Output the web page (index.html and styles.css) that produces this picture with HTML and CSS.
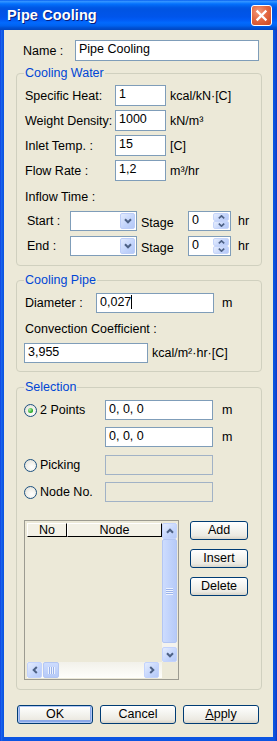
FILE: index.html
```html
<!DOCTYPE html>
<html lang="en">
<head>
  <meta charset="UTF-8" />
  <meta name="viewport" content="width=device-width, initial-scale=1.0" />
  <title>Pipe Cooling</title>
  <link rel="stylesheet" href="styles.css">
</head>
<body>
  <div class="window">
    <div class="titlebar">
      <span class="title">Pipe Cooling</span>
      <span class="close">
        <svg width="13" height="13" viewBox="0 0 13 13"><path d="M2.5 2.5 L10.5 10.5 M10.5 2.5 L2.5 10.5" stroke="#fff" stroke-width="2.4" stroke-linecap="square" fill="none"/></svg>
      </span>
    </div>

    <div class="content">
      <div class="name-row">
        <span class="name-label">Name :</span>
        <div class="edit name-edit">Pipe Cooling</div>
      </div>

      <fieldset class="group water">
        <legend>Cooling Water</legend>
        <div class="row first"><span class="lbl">Specific Heat:</span><div class="edit short">1</div><span class="unit">kcal/kN·[C]</span></div>
        <div class="row"><span class="lbl">Weight Density:</span><div class="edit short">1000</div><span class="unit">kN/m³</span></div>
        <div class="row"><span class="lbl">Inlet Temp. :</span><div class="edit short">15</div><span class="unit">[C]</span></div>
        <div class="row"><span class="lbl">Flow Rate :</span><div class="edit short">1,2</div><span class="unit">m³/hr</span></div>
        <div class="inflow-label">Inflow Time :</div>
        <div class="time-row">
          <span class="time-lbl">Start :</span>
          <div class="combo"><span class="drop"><svg width="8" height="6" viewBox="0 0 8 6"><path d="M1 1.2 L4 4.3 L7 1.2" stroke="#4d6185" stroke-width="2" fill="none"/></svg></span></div>
          <span class="stage">Stage</span>
          <div class="spin">
            <span class="spin-val">0</span>
            <span class="spin-btns">
              <span class="sp"><svg width="7" height="4" viewBox="0 0 7 4"><path d="M0.8 3.4 L3.5 0.8 L6.2 3.4" stroke="#4d6185" stroke-width="1.6" fill="none"/></svg></span>
              <span class="sp"><svg width="7" height="4" viewBox="0 0 7 4"><path d="M0.8 0.6 L3.5 3.2 L6.2 0.6" stroke="#4d6185" stroke-width="1.6" fill="none"/></svg></span>
            </span>
          </div>
          <span class="hr">hr</span>
        </div>
        <div class="time-row second">
          <span class="time-lbl">End :</span>
          <div class="combo"><span class="drop"><svg width="8" height="6" viewBox="0 0 8 6"><path d="M1 1.2 L4 4.3 L7 1.2" stroke="#4d6185" stroke-width="2" fill="none"/></svg></span></div>
          <span class="stage">Stage</span>
          <div class="spin">
            <span class="spin-val">0</span>
            <span class="spin-btns">
              <span class="sp"><svg width="7" height="4" viewBox="0 0 7 4"><path d="M0.8 3.4 L3.5 0.8 L6.2 3.4" stroke="#4d6185" stroke-width="1.6" fill="none"/></svg></span>
              <span class="sp"><svg width="7" height="4" viewBox="0 0 7 4"><path d="M0.8 0.6 L3.5 3.2 L6.2 0.6" stroke="#4d6185" stroke-width="1.6" fill="none"/></svg></span>
            </span>
          </div>
          <span class="hr">hr</span>
        </div>
      </fieldset>

      <fieldset class="group pipe">
        <legend>Cooling Pipe</legend>
        <div class="pipe-row first"><span class="dia-lbl">Diameter :</span><div class="edit dia-edit">0,027<span class="caret"></span></div><span class="unit-m">m</span></div>
        <div class="pipe-row">Convection Coefficient :</div>
        <div class="pipe-row conv"><div class="edit conv-edit">3,955</div><span class="unit">kcal/m²·hr·[C]</span></div>
      </fieldset>

      <fieldset class="group selection">
        <legend>Selection</legend>
        <div class="sel-row first">
          <span class="sel-lbl"><span class="radio on"><span class="dot"></span></span>2 Points</span>
          <div class="edit sel-edit">0, 0, 0</div><span class="sel-m">m</span>
        </div>
        <div class="sel-row">
          <span class="sel-lbl"></span>
          <div class="edit sel-edit">0, 0, 0</div><span class="sel-m">m</span>
        </div>
        <div class="sel-row pick">
          <span class="sel-lbl"><span class="radio"></span>Picking</span>
          <div class="edit sel-edit disabled"></div>
        </div>
        <div class="sel-row">
          <span class="sel-lbl"><span class="radio"></span>Node No.</span>
          <div class="edit sel-edit disabled"></div>
        </div>

        <div class="list-area">
          <div class="listbox">
            <div class="list-main">
              <div class="list-head"><span class="col-no">No</span><span class="col-node">Node</span></div>
            </div>
            <div class="vscroll">
              <span class="sbtn v"><svg width="8" height="6" viewBox="0 0 8 6"><path d="M1 4.8 L4 1.7 L7 4.8" stroke="#4d6185" stroke-width="2" fill="none"/></svg></span>
              <span class="vthumb"><span class="grip-v"></span></span>
              <span class="vtrack"></span>
              <span class="sbtn v down"><svg width="8" height="6" viewBox="0 0 8 6"><path d="M1 1.2 L4 4.3 L7 1.2" stroke="#4d6185" stroke-width="2" fill="none"/></svg></span>
            </div>
            <div class="hscroll">
              <span class="sbtn h"><svg width="6" height="8" viewBox="0 0 6 8"><path d="M4.8 1 L1.7 4 L4.8 7" stroke="#4d6185" stroke-width="2" fill="none"/></svg></span>
              <span class="hthumb"><span class="grip-h"></span></span>
              <span class="htrack"></span>
              <span class="sbtn h"><svg width="6" height="8" viewBox="0 0 6 8"><path d="M1.2 1 L4.3 4 L1.2 7" stroke="#4d6185" stroke-width="2" fill="none"/></svg></span>
            </div>
            <div class="corner"></div>
          </div>
          <div class="list-btns">
            <div class="btn">Add</div>
            <div class="btn">Insert</div>
            <div class="btn">Delete</div>
          </div>
        </div>
      </fieldset>

      <div class="footer">
        <div class="btn wide default">OK</div>
        <div class="btn wide">Cancel</div>
        <div class="btn wide"><u>A</u>pply</div>
      </div>
    </div>
  </div>
</body>
</html>
```

FILE: styles.css
```css
* {
  box-sizing: border-box;
}
body {
  margin: 0;
  background: #fff;
  font-family: "Liberation Sans", Arial, sans-serif;
  font-size: 12.5px;
  color: #000;
}
.window {
  width: 277px;
  height: 741px;
  display: flex;
  flex-direction: column;
  background: linear-gradient(90deg, #0831d9 0, #1c68f0 1px, #0b55e2 3px, #0b55e2 274px, #1547c8 276px, #0831d9 277px);
}
.titlebar {
  height: 30px;
  display: flex;
  align-items: center;
  justify-content: space-between;
  padding: 0 5px 0 7px;
  background: linear-gradient(#0058ee 0%, #3593ff 4%, #288eff 7%, #127dff 10%, #036ffc 14%, #0262ee 20%, #0057e5 26%, #0054e3 32%, #0055eb 56%, #005bf5 66%, #026afe 76%, #0062ef 86%, #0052d6 92%, #0046c0 100%);
}
.title {
  color: #fff;
  font-weight: bold;
  font-size: 14.5px;
  text-shadow: 1px 1px 0 #0a1e7a;
  letter-spacing: 0.1px;
}
.close {
  width: 21px;
  height: 21px;
  border: 1px solid #fff;
  border-radius: 3px;
  display: flex;
  align-items: center;
  justify-content: center;
  background: radial-gradient(circle at 35% 30%, #f39a7c 0, #e46a43 45%, #cc4620 100%);
}
.content {
  height: 707px;
  margin: 0 4px;
  background: #ece9d8;
  padding: 10px 11px 0 12px;
  overflow: hidden;
}

/* edits */
.edit {
  height: 20px;
  border: 1px solid #7f9db9;
  background: #fff;
  padding: 0 3px;
  line-height: 17px;
  white-space: nowrap;
}
.edit.disabled {
  background: #ece9d8;
  border-color: #a1b2c6;
}
.caret {
  display: inline-block;
  width: 1px;
  height: 14px;
  background: #000;
  vertical-align: -3px;
}

.name-row {
  display: flex;
  align-items: center;
  padding-left: 7px;
}
.name-label {
  width: 52px;
}
.name-edit {
  width: 184px;
  height: 21px;
}

/* group boxes */
.group {
  margin: 0;
  border: 1px solid #d0d0bf;
  border-radius: 4px;
  padding: 0 8px 0 7px;
  min-width: 0;
}
.group legend {
  padding: 0 1px;
  color: #0046d5;
  line-height: 14px;
}
.water {
  margin-top: 5px;
  padding-bottom: 9px;
}
.pipe {
  margin-top: 7px;
  padding-bottom: 8px;
}
.selection {
  margin-top: 8px;
  padding-bottom: 9px;
}

.row {
  display: flex;
  align-items: center;
  height: 21px;
  margin-top: 4px;
}
.row.first {
  margin-top: 5px;
}
.lbl {
  width: 91px;
  padding-left: 1px;
  white-space: nowrap;
}
.edit.short {
  width: 51px;
  height: 21px;
}
.unit {
  margin-left: 4px;
}
.inflow-label {
  margin-top: 4px;
  height: 24px;
  line-height: 24px;
  padding-left: 1px;
}
.time-row {
  display: flex;
  align-items: center;
  height: 20px;
  margin-top: 2px;
}
.time-row.second {
  margin-top: 5px;
}
.time-lbl {
  width: 46px;
  padding-left: 3px;
}
.combo {
  width: 67px;
  height: 20px;
  border: 1px solid #7f9db9;
  background: #fff;
  display: flex;
  justify-content: flex-end;
  padding: 1px;
}
.drop {
  width: 15px;
  display: flex;
  align-items: center;
  justify-content: center;
  border: 1px solid #bccdf8;
  border-radius: 2px;
  background: linear-gradient(135deg, #e3ebfd, #c1d3fb 60%, #b4c8f6);
}
.stage {
  width: 47px;
  margin-left: 4px;
  padding-top: 3px;
}
.spin {
  width: 43px;
  height: 20px;
  border: 1px solid #7f9db9;
  background: #fff;
  display: flex;
  padding: 1px;
}
.spin-val {
  flex: 1;
  padding-left: 2px;
  line-height: 15px;
}
.spin-btns {
  width: 16px;
  display: flex;
  flex-direction: column;
}
.sp {
  flex: 1;
  display: flex;
  align-items: center;
  justify-content: center;
  border: 1px solid #c6d5fa;
  border-radius: 2px;
  background: linear-gradient(135deg, #e6edfd, #c3d4fb 60%, #b6c9f7);
}
.hr {
  margin-left: 7px;
}

/* cooling pipe */
.pipe-row {
  display: flex;
  align-items: center;
  height: 20px;
  margin-top: 6px;
  padding-left: 1px;
}
.pipe-row.conv {
  margin-top: 4px;
  padding-left: 0;
}
.dia-lbl {
  width: 71px;
}
.dia-edit {
  width: 118px;
}
.unit-m {
  margin-left: 8px;
}
.conv-edit {
  width: 124px;
}

/* selection */
.sel-row {
  display: flex;
  align-items: center;
  height: 20px;
  margin-top: 7px;
}
.sel-row.first {
  margin-top: 6px;
}
.sel-row.pick {
  margin-top: 8px;
}
.sel-lbl {
  width: 81px;
  display: flex;
  align-items: center;
}
.radio {
  width: 13px;
  height: 13px;
  border: 1px solid #1c5180;
  border-radius: 50%;
  margin-right: 3px;
  background: radial-gradient(circle at 60% 65%, #fff 0, #f4f3ee 40%, #dcdad0 100%);
  display: flex;
  align-items: center;
  justify-content: center;
}
.dot {
  width: 5px;
  height: 5px;
  border-radius: 50%;
  background: radial-gradient(circle at 35% 35%, #aef4a6, #21a121 70%);
}
.sel-edit {
  width: 108px;
}
.sel-m {
  margin-left: 9px;
}

/* list */
.list-area {
  display: flex;
  margin-top: 18px;
}
.listbox {
  width: 155px;
  height: 160px;
  border: 1px solid #9c9b91;
  padding: 2px 1px 1px 2px;
  display: grid;
  grid-template-columns: 1fr 15px;
  grid-template-rows: 1fr 16px;
}
.list-head {
  display: flex;
  height: 14px;
  line-height: 12px;
}
.col-no,
.col-node {
  text-align: center;
  background: #f3f1e6;
  border-top: 1px solid #fff;
  border-left: 1px solid #fff;
  border-right: 1px solid #000;
  border-bottom: 1px solid #000;
}
.col-no {
  width: 40px;
}
.col-node {
  width: 95px;
}
.vscroll {
  display: flex;
  flex-direction: column;
  background: #f4f3ee;
}
.sbtn {
  display: flex;
  align-items: center;
  justify-content: center;
  border: 1px solid #c3d3fd;
  border-radius: 2px;
  background: linear-gradient(135deg, #e4ecfd, #c4d5fc 60%, #b5c9f8);
}
.sbtn.v {
  height: 16px;
}
.sbtn.v.down {
  height: 15px;
}
.sbtn.h {
  width: 15px;
}
.vthumb {
  height: 104px;
  border: 1px solid #b3c6f3;
  border-radius: 2px;
  background: linear-gradient(90deg, #cddcfe, #c1d3fb 50%, #b6caf8);
  display: flex;
  align-items: center;
  justify-content: center;
}
.grip-v {
  width: 7px;
  height: 7px;
  background: repeating-linear-gradient(#eef3fe 0 1px, #9bb3ea 1px 2px);
}
.vtrack {
  flex: 1;
}
.hscroll {
  display: flex;
  padding-right: 3px;
  background: linear-gradient(#f2f1ea, #fefefb);
}
.hthumb {
  width: 16px;
  margin-left: 1px;
  border: 1px solid #b3c6f3;
  border-radius: 2px;
  background: linear-gradient(#cddcfe, #c1d3fb 50%, #b6caf8);
  display: flex;
  align-items: center;
  justify-content: center;
}
.grip-h {
  width: 7px;
  height: 7px;
  background: repeating-linear-gradient(90deg, #eef3fe 0 1px, #9bb3ea 1px 2px);
}
.htrack {
  flex: 1;
}
.corner {
  background: #ece9d8;
}
.list-btns {
  display: flex;
  flex-direction: column;
  gap: 9px;
  margin-left: 11px;
  padding-top: 1px;
}

/* buttons */
.btn {
  width: 58px;
  height: 19px;
  border: 1px solid #003c74;
  border-radius: 3px;
  background: linear-gradient(#fff 0%, #f5f5f1 40%, #eceae2 80%, #d8d4c9 100%);
  text-align: center;
  line-height: 16px;
}
.footer {
  display: flex;
  gap: 7px;
  margin-top: 15px;
  padding-left: 1px;
}
.btn.wide {
  width: 76px;
}
.btn.default {
  box-shadow: inset 0 0 0 1px #b2c8f4, inset 0 -1px 0 2px #8aa8e8;
}
```
